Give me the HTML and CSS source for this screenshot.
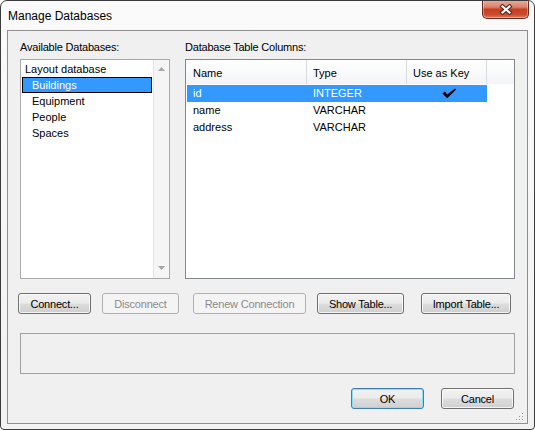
FILE: index.html
```html
<!DOCTYPE html>
<html>
<head>
<meta charset="utf-8">
<link rel="stylesheet" href="styles.css">
</head>
<body>
<div class="window">
  <div class="titlebar">
    <span class="title">Manage Databases</span>
    <div class="close">
      <svg width="14" height="11" viewBox="0 0 14 11"><path d="M3.5 2.5 L10.5 8.5 M10.5 2.5 L3.5 8.5" stroke="#50201a" stroke-width="4.2" stroke-linecap="square"/><path d="M3.5 2.5 L10.5 8.5 M10.5 2.5 L3.5 8.5" stroke="#ffffff" stroke-width="2.2" stroke-linecap="square"/></svg>
    </div>
  </div>
  <div class="client">
    <div class="top">
      <div class="col col-left">
        <div class="label">Available Databases:</div>
        <div class="listbox">
          <div class="items">
            <div class="item">Layout database</div>
            <div class="item sub sel">Buildings</div>
            <div class="item sub">Equipment</div>
            <div class="item sub">People</div>
            <div class="item sub">Spaces</div>
          </div>
          <div class="vscroll">
            <svg width="7" height="4" viewBox="0 0 7 4"><path d="M3.5 0 L7 4 L0 4 Z" fill="#a6a6a6"/></svg>
            <svg width="7" height="4" viewBox="0 0 7 4"><path d="M0 0 L7 0 L3.5 4 Z" fill="#a6a6a6"/></svg>
          </div>
        </div>
      </div>
      <div class="col col-right">
        <div class="label">Database Table Columns:</div>
        <div class="listview">
          <div class="lvheader">
            <div class="hcell h1">Name</div>
            <div class="hcell h2">Type</div>
            <div class="hcell h3">Use as Key</div>
          </div>
          <div class="lvrows">
            <div class="row sel">
              <div class="cell c1">id</div>
              <div class="cell c2">INTEGER</div>
              <div class="cell c3"><svg width="15" height="11" viewBox="0 0 15 11"><path d="M0.5 5.5 L2.8 3.6 L5.2 6.4 L13 0.6 L14.2 1.6 L5.2 10.2 Z" fill="#000"/></svg></div>
            </div>
            <div class="row">
              <div class="cell c1">name</div>
              <div class="cell c2">VARCHAR</div>
              <div class="cell c3"></div>
            </div>
            <div class="row">
              <div class="cell c1">address</div>
              <div class="cell c2">VARCHAR</div>
              <div class="cell c3"></div>
            </div>
          </div>
        </div>
      </div>
    </div>
    <div class="btnrow">
      <button class="btn b-connect">Connect...</button>
      <button class="btn b-disconnect" disabled>Disconnect</button>
      <button class="btn b-renew" disabled>Renew Connection</button>
      <button class="btn b-show">Show Table...</button>
      <button class="btn b-import">Import Table...</button>
    </div>
    <div class="status"></div>
    <div class="okrow">
      <button class="btn b-ok default">OK</button>
      <button class="btn b-cancel">Cancel</button>
    </div>
    <svg class="grip" width="10" height="10" viewBox="0 0 10 10">
      <rect x="7" y="1" width="1" height="1" fill="#9a9a9a"/>
      <rect x="4" y="4" width="1" height="1" fill="#9a9a9a"/>
      <rect x="7" y="4" width="1" height="1" fill="#9a9a9a"/>
      <rect x="1" y="7" width="1" height="1" fill="#9a9a9a"/>
      <rect x="4" y="7" width="1" height="1" fill="#9a9a9a"/>
      <rect x="7" y="7" width="1" height="1" fill="#9a9a9a"/>
    </svg>
  </div>
</div>
</body>
</html>
```
FILE: styles.css
```css
* { box-sizing: border-box; }
html, body { margin: 0; padding: 0; background: #ffffff; }
body {
  font-family: "Liberation Sans", Arial, sans-serif;
  font-size: 11px;
  color: #000;
}
.window {
  width: 535px;
  height: 430px;
  border: 1px solid #3c3c3c;
  border-radius: 7px 7px 4px 4px;
  background: linear-gradient(#fafafa, #f2f2f2);
  display: flex;
  flex-direction: column;
  overflow: hidden;
}
.titlebar {
  height: 29px;
  flex: none;
  display: flex;
  align-items: center;
  padding-left: 7px;
}
.title {
  font-size: 12px;
  flex: 1;
  padding-top: 1px;
}
.close {
  align-self: flex-start;
  margin-top: -1px;
  margin-right: 5px;
  width: 47px;
  height: 19px;
  border: 1px solid #6b2a1e;
  border-top: none;
  border-radius: 0 0 5px 5px;
  background: linear-gradient(#eab0a2 0%, #dc7f69 40%, #c73d22 52%, #c84a2e 80%, #df7a5e 100%);
  box-shadow: inset 0 0 0 1px rgba(255, 255, 255, 0.35);
  display: flex;
  align-items: center;
  justify-content: center;
}
.client {
  flex: 1;
  margin: 0 6px 5px;
  border: 1px solid #8f8f8f;
  background: #f0f0f0;
  padding: 10px 12px 14px;
  display: flex;
  flex-direction: column;
  position: relative;
}
.top {
  display: flex;
  gap: 15px;
  height: 238px;
  flex: none;
}
.col { display: flex; flex-direction: column; }
.col-left { width: 150px; }
.col-right { width: 330px; }
.label {
  height: 13px;
  line-height: 13px;
  margin-bottom: 5px;
  letter-spacing: -0.2px;
  white-space: nowrap;
}
.listbox {
  height: 220px;
  border: 1px solid #a9a9a9;
  background: #fff;
  display: flex;
}
.items { flex: 1; padding-top: 1px; }
.item {
  height: 16px;
  line-height: 16px;
  margin: 0 1px;
  padding-left: 3px;
  white-space: nowrap;
}
.item.sub { padding-left: 10px; }
.item.sel {
  background: #3399ff;
  color: #fff;
  border: 1px solid #000;
  line-height: 14px;
  padding-left: 9px;
}
.vscroll {
  width: 16px;
  background: #f5f5f5;
  border-left: 1px solid #e4e4e4;
  display: flex;
  flex-direction: column;
  justify-content: space-between;
  align-items: center;
  padding: 7px 0 8px;
}
.vscroll svg { display: block; }
.listview {
  height: 220px;
  border: 1px solid #828790;
  background: #fff;
}
.lvheader {
  height: 24px;
  display: flex;
  background: linear-gradient(#ffffff, #f3f4f6);
}
.hcell {
  line-height: 24px;
  padding-top: 1px;
  border-right: 1px solid #d8dadd;
  white-space: nowrap;
}
.h1 { width: 121px; padding-left: 7px; }
.h2 { width: 100px; padding-left: 6px; }
.h3 { width: 80px; padding-left: 6px; }
.lvrows { padding-top: 1px; }
.row {
  display: flex;
  height: 17px;
  line-height: 17px;
  margin-left: 1px;
  width: 300px;
}
.row.sel { background: #3399ff; color: #fff; }
.cell { padding-left: 6px; white-space: nowrap; }
.c1 { width: 120px; }
.c2 { width: 100px; }
.c3 {
  width: 80px;
  padding-left: 0;
  display: flex;
  align-items: center;
  justify-content: center;
  padding-left: 4px;
}
.c3 svg { display: block; }
.btnrow {
  display: flex;
  margin-top: 14px;
  height: 21px;
  flex: none;
}
.btn {
  height: 21px;
  padding: 0;
  font-family: inherit;
  font-size: 11px;
  color: #000;
  border: 1px solid #707070;
  border-radius: 3px;
  background: linear-gradient(#f2f2f2 0%, #ebebeb 49%, #dddddd 51%, #cfcfcf 100%);
  box-shadow: inset 0 0 0 1px rgba(255, 255, 255, 0.75);
  letter-spacing: -0.2px;
  white-space: nowrap;
}
.btn:disabled {
  color: #8b8b8b;
  border-color: #adb2b5;
  background: #f4f4f4;
  box-shadow: none;
}
.b-connect { width: 73px; margin-left: -2px; }
.b-disconnect { width: 77px; margin-left: 11px; }
.b-renew { width: 113px; margin-left: 14px; }
.b-show { width: 87px; margin-left: 11px; }
.b-import { width: 90px; margin-left: 17px; }
.status {
  margin-top: 19px;
  height: 41px;
  flex: none;
  border: 1px solid #a0a0a0;
}
.okrow {
  margin-top: 14px;
  display: flex;
  justify-content: flex-end;
  gap: 17px;
  margin-right: 1px;
  flex: none;
}
.b-ok, .b-cancel { width: 73px; }
.btn.default {
  border-color: #3c7fb1;
  box-shadow: inset 0 0 0 1px #8fdcf7;
}
.grip {
  position: absolute;
  right: 2px;
  bottom: 1px;
}
```
